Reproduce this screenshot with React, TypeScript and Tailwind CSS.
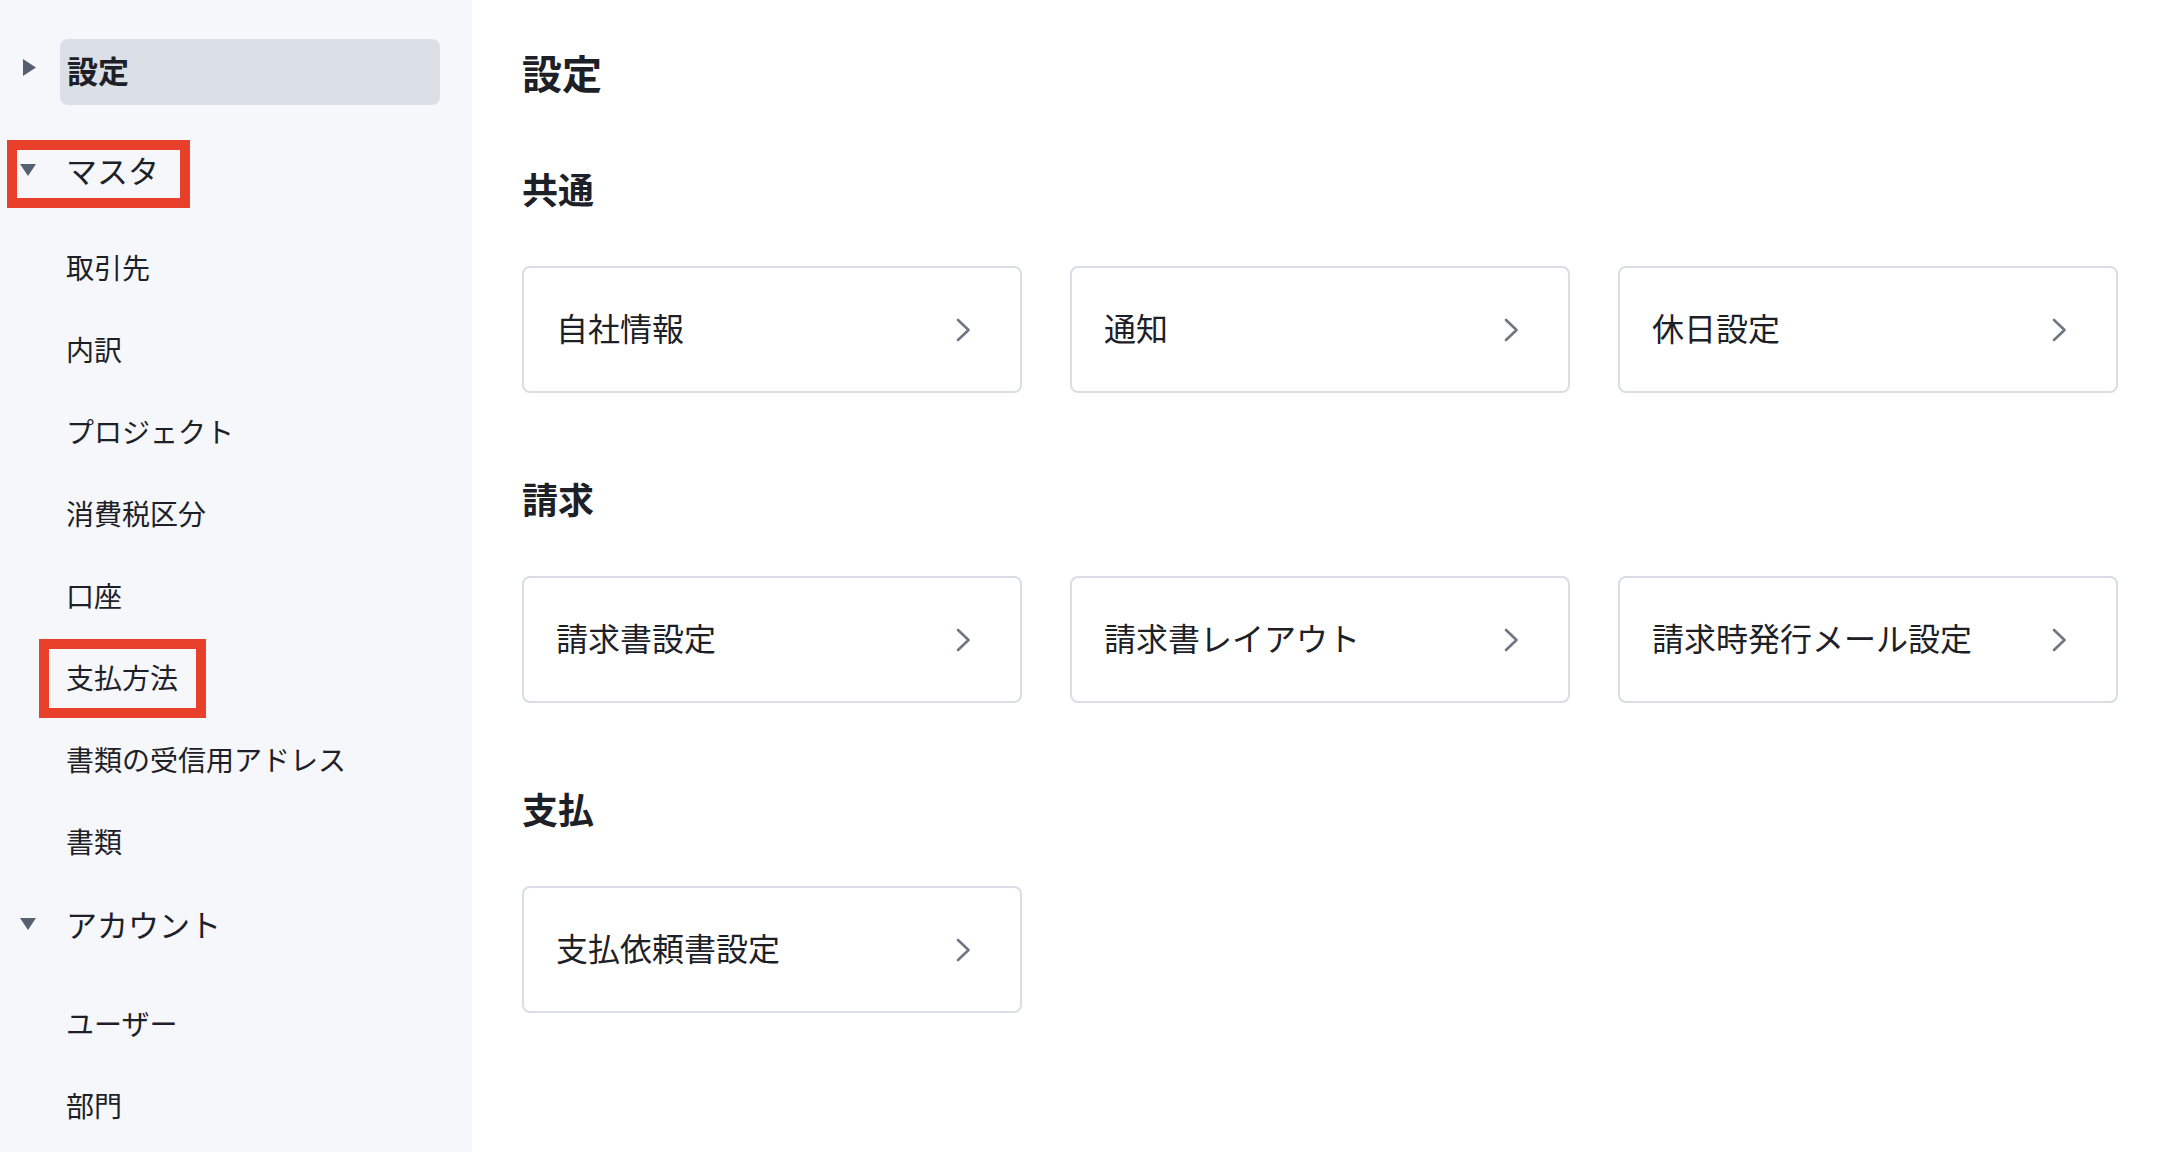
import React from "react";

const font = { fontFamily: '"Noto Sans CJK JP", "Noto Sans", sans-serif' };

function TriangleRight() {
  return (
    <svg width="13" height="17" viewBox="0 0 13 17" className="shrink-0">
      <path d="M0 0 L13 8.5 L0 17 Z" fill="#566170" />
    </svg>
  );
}

function TriangleDown() {
  return (
    <svg width="16" height="12" viewBox="0 0 16 12" className="shrink-0">
      <path d="M0 0 L16 0 L8 12 Z" fill="#566170" />
    </svg>
  );
}

function Chevron() {
  return (
    <svg width="15" height="24" viewBox="0 0 15 24" className="shrink-0">
      <path
        d="M2 2 L12.5 12 L2 22"
        fill="none"
        stroke="#6f7783"
        strokeWidth="2.6"
        strokeLinecap="round"
        strokeLinejoin="round"
      />
    </svg>
  );
}

function GroupHeader({ label, marked }: { label: string; marked?: boolean }) {
  return (
    <div className="relative flex h-[82px] items-center">
      <div className="flex w-[66px] justify-start pb-[4px] pl-[20px]">
        <TriangleDown />
      </div>
      <span className="pb-[5px] text-[31px] leading-none text-[#1d2127]">{label}</span>
      {marked ? (
        <div className="pointer-events-none absolute left-[7px] top-[9px] h-[68px] w-[183px] border-[10px] border-[#e8402a]" />
      ) : null}
    </div>
  );
}

function NavItem({ label, marked }: { label: string; marked?: boolean }) {
  return (
    <div className="relative flex h-[82px] items-center pl-[66px]">
      <span className="pb-[3px] text-[28px] leading-none text-[#1d2127]">{label}</span>
      {marked ? (
        <div className="pointer-events-none absolute left-[39px] top-[2px] h-[79px] w-[167px] border-[10px] border-[#e8402a]" />
      ) : null}
    </div>
  );
}

function Card({ label }: { label: string }) {
  return (
    <div className="flex h-[127px] items-center justify-between rounded-lg border-2 border-[#dadee4] bg-white pl-[32px] pr-[49px]">
      <span className="pb-[5px] text-[32px] leading-none text-[#1d2127]">{label}</span>
      <Chevron />
    </div>
  );
}

function Section({ title, items, first }: { title: string; items: string[]; first?: boolean }) {
  return (
    <section className={first ? "mt-[70px]" : "mt-[83px]"}>
      <h2 className="h-[44px] text-[36px] font-bold leading-[44px] text-[#1d2127]">{title}</h2>
      <div className="mt-[56px] grid grid-cols-3 gap-[48px]">
        {items.map((it) => (
          <Card key={it} label={it} />
        ))}
      </div>
    </section>
  );
}

export default function App() {
  return (
    <div className="flex h-[1152px] w-[2170px] overflow-hidden bg-white" style={font}>
      <aside className="flex w-[472px] shrink-0 flex-col bg-[#f5f7fa] pt-[39px]">
        <div className="flex h-[66px] items-center">
          <div className="flex w-[60px] justify-start pb-[10px] pl-[23px]">
            <TriangleRight />
          </div>
          <div className="flex h-full w-[380px] items-center rounded-lg bg-[#dbdfe6] pl-[7px]">
            <span className="pb-[5px] text-[31px] font-bold leading-none text-[#1d2127]">設定</span>
          </div>
        </div>
        <div className="mt-[26px] mb-[14px]">
          <GroupHeader label="マスタ" marked />
        </div>
        <NavItem label="取引先" />
        <NavItem label="内訳" />
        <NavItem label="プロジェクト" />
        <NavItem label="消費税区分" />
        <NavItem label="口座" />
        <NavItem label="支払方法" marked />
        <NavItem label="書類の受信用アドレス" />
        <NavItem label="書類" />
        <div className="mt-[2px] mb-[16px]">
          <GroupHeader label="アカウント" />
        </div>
        <NavItem label="ユーザー" />
        <NavItem label="部門" />
      </aside>
      <main className="flex-1 pl-[50px] pr-[52px] pt-[48px]">
        <h1 className="h-[48px] text-[40px] font-bold leading-[48px] text-[#1d2127]">設定</h1>
        <Section first title="共通" items={["自社情報", "通知", "休日設定"]} />
        <Section title="請求" items={["請求書設定", "請求書レイアウト", "請求時発行メール設定"]} />
        <Section title="支払" items={["支払依頼書設定"]} />
      </main>
    </div>
  );
}
